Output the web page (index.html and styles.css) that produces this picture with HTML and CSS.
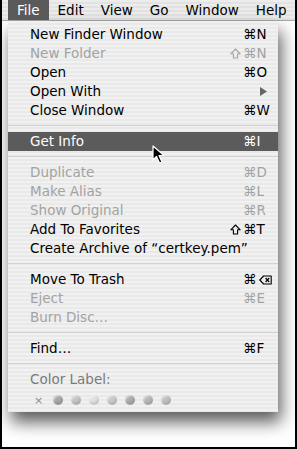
FILE: index.html
```html
<!DOCTYPE html>
<html lang="en">
<head>
  <meta charset="UTF-8" />
  <title>File Menu</title>
  <link rel="stylesheet" href="styles.css">
</head>
<body>
  <div class="screen">
    <div class="menubar">
      <span class="title active">File</span>
      <span class="title">Edit</span>
      <span class="title">View</span>
      <span class="title">Go</span>
      <span class="title">Window</span>
      <span class="title">Help</span>
    </div>

    <div class="menu">
      <div class="item"><span>New Finder Window</span><span></span><span class="key">⌘N</span></div>
      <div class="item off"><span>New Folder</span><span class="shift"><svg width="11" height="11" viewBox="0 0 11 11"><path d="M5.5 1 L10.2 5.8 L7.6 5.8 L7.6 10 L3.4 10 L3.4 5.8 L0.8 5.8 Z" fill="none" stroke="currentColor" stroke-width="1.1" stroke-linejoin="round"/></svg></span><span class="key">⌘N</span></div>
      <div class="item"><span>Open</span><span></span><span class="key">⌘O</span></div>
      <div class="item"><span>Open With</span><span></span><span class="arrow"><svg width="7" height="9" viewBox="0 0 7 9"><path d="M0 0 L7 4.5 L0 9 Z" fill="#666"/></svg></span></div>
      <div class="item"><span>Close Window</span><span></span><span class="key">⌘W</span></div>
      <div class="sep"></div>
      <div class="item selected"><span>Get Info</span><span></span><span class="key">⌘I</span></div>
      <div class="sep"></div>
      <div class="item off"><span>Duplicate</span><span></span><span class="key">⌘D</span></div>
      <div class="item off"><span>Make Alias</span><span></span><span class="key">⌘L</span></div>
      <div class="item off"><span>Show Original</span><span></span><span class="key">⌘R</span></div>
      <div class="item"><span>Add To Favorites</span><span class="shift"><svg width="11" height="11" viewBox="0 0 11 11"><path d="M5.5 1 L10.2 5.8 L7.6 5.8 L7.6 10 L3.4 10 L3.4 5.8 L0.8 5.8 Z" fill="none" stroke="currentColor" stroke-width="1.1" stroke-linejoin="round"/></svg></span><span class="key">⌘T</span></div>
      <div class="item"><span>Create Archive of “certkey.pem”</span><span></span><span></span></div>
      <div class="sep"></div>
      <div class="item"><span>Move To Trash</span><span></span><span class="key">⌘<svg class="del" width="13" height="10" viewBox="0 0 13 10"><path d="M0.8 5 L4.6 1 L12.2 1 L12.2 9 L4.6 9 Z" fill="none" stroke="currentColor" stroke-width="1.1" stroke-linejoin="round"/><path d="M6.6 3 L10.2 7 M10.2 3 L6.6 7" stroke="currentColor" stroke-width="1.2"/></svg></span></div>
      <div class="item off"><span>Eject</span><span></span><span class="key">⌘E</span></div>
      <div class="item off"><span>Burn Disc…</span><span></span><span></span></div>
      <div class="sep"></div>
      <div class="item"><span>Find…</span><span></span><span class="key">⌘F</span></div>
      <div class="sep"></div>
      <div class="label">Color Label:</div>
      <div class="swatches">
        <span class="none">×</span>
        <span class="dot" style="background: #a9a9a9"></span>
        <span class="dot" style="background: #c6c6c6"></span>
        <span class="dot" style="background: #e2e2e2"></span>
        <span class="dot" style="background: #cbcbcb"></span>
        <span class="dot" style="background: #aeaeae"></span>
        <span class="dot" style="background: #b9b9b9"></span>
        <span class="dot" style="background: #c2c2c2"></span>
      </div>
    </div>

    <!-- mouse pointer over Get Info -->
    <svg class="cursor" width="14" height="20" viewBox="0 0 14 20">
      <path d="M1 1 L1 15 L4.5 11.5 L7.5 18 L10 17 L7 10.5 L12 10.5 Z" fill="#000" stroke="#fff" stroke-width="1.2" stroke-linejoin="round"/>
    </svg>
  </div>
</body>
</html>
```

FILE: styles.css
```css
html, body {
  margin: 0;
  padding: 0;
  background: #000;
}
.screen {
  position: relative;
  width: 293px;
  height: 447px;
  border: 2px solid #000;
  border-top: none;
  background: #fff;
  overflow: hidden;
  font-family: 'DejaVu Sans', 'Noto Sans', sans-serif;
}
.menubar {
  display: flex;
  height: 20px;
  padding-left: 6px;
  background: repeating-linear-gradient(#ececec 0, #ececec 2px, #e2e2e2 2px, #e2e2e2 4px);
  border-bottom: 1px solid #a8a8a8;
  font-size: 13.5px;
  line-height: 20px;
  color: #000;
  white-space: nowrap;
}
.title {
  padding: 0 9px;
  margin-right: -1px;
}
.title.active {
  background: #5a5a5a;
  color: #fff;
  margin-right: 0;
}
.menu {
  width: 270px;
  margin-left: 6px;
  padding: 4px 0 1px;
  background: repeating-linear-gradient(#f1f1f1 0, #f1f1f1 2px, #e9e9e9 2px, #e9e9e9 4px);
  box-shadow: 3px 10px 16px rgba(0, 0, 0, 0.65);
  font-size: 13.5px;
  color: #000;
}
.item {
  display: grid;
  grid-template-columns: 1fr 21px 24px;
  height: 19px;
  line-height: 19px;
  padding: 0 11px 0 22px;
  white-space: nowrap;
}
.item.off {
  color: #a3a3a3;
}
.item.selected {
  background: #5b5b5b;
  color: #fff;
}
.shift {
  display: flex;
  align-items: center;
  justify-content: flex-end;
  padding-right: 2px;
}
.key {
  display: flex;
  align-items: center;
}
.key svg {
  flex-shrink: 0;
}
.del {
  margin-left: 2px;
}
.arrow {
  display: flex;
  align-items: center;
  justify-content: flex-end;
}
.sep {
  height: 12px;
  background: linear-gradient(transparent 5px, #d2d2d2 5px, #d2d2d2 6px, transparent 6px);
}
.label {
  height: 19px;
  line-height: 19px;
  padding-left: 22px;
  color: #7a7a7a;
}
.swatches {
  display: flex;
  align-items: center;
  height: 22px;
  padding-left: 26px;
}
.none {
  width: 19px;
  font-size: 11px;
  color: #8c8c8c;
}
.dot {
  width: 10px;
  height: 10px;
  margin-right: 8px;
  border-radius: 50%;
  box-shadow: inset -1px -2px 3px rgba(0, 0, 0, 0.15), inset 1px 1px 2px rgba(255, 255, 255, 0.6);
}
.cursor {
  position: absolute;
  left: 150px;
  top: 145px;
}
```
